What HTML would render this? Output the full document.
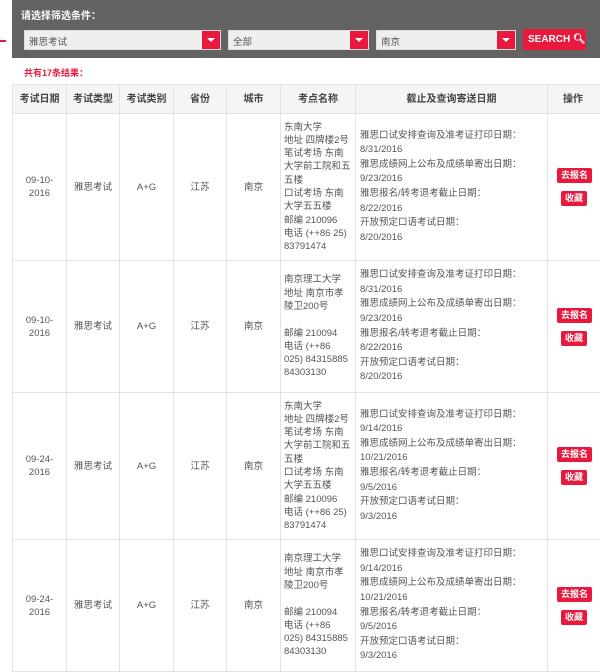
<!DOCTYPE html>
<html><head><meta charset="utf-8"><style>
*{margin:0;padding:0;box-sizing:border-box}
body{width:600px;height:647px;overflow:hidden;background:#fff;font-family:"Liberation Sans","Noto Sans CJK SC",sans-serif;position:relative;color:#555;font-size:9.5px}
.panel{position:absolute;left:12px;top:0;width:600px;height:58px;background:#636363}
.panel .t{position:absolute;left:9px;top:7px;color:#fff;font-weight:bold;font-size:10px}
.sel{position:absolute;top:30px;height:20px;background:#efefef;border:1px solid #ddd;font-size:9.5px;color:#555;padding:3px 0 0 4px}
.sel .a{position:absolute;right:0;top:0;width:18px;height:18px;background:#e8193c}
.sel .a:after{content:"";position:absolute;left:5px;top:7px;border-left:4px solid transparent;border-right:4px solid transparent;border-top:4px solid #fff}
.btn{position:absolute;left:523px;top:29px;width:63px;height:21px;background:#e8193c;color:#fff;font-weight:bold;font-size:10px;padding:5px 0 0 5px}
.cnt{position:absolute;left:24px;top:66px;color:#e8193c;font-weight:bold;font-size:9px}
table{position:absolute;left:12px;top:84px;border-collapse:collapse;width:605px;table-layout:fixed}
td,th{border:1px solid #e3e3e3;text-align:center;vertical-align:middle;line-height:13px}
th{height:29px;background:#f5f5f5;font-size:10px;color:#444}
td.l{text-align:left;padding-left:3px;padding-right:4px;line-height:13.3px}
td.d{text-align:left;padding-left:4px;line-height:14.6px}
.r{display:inline-block;background:#e8193c;color:#fff;font-weight:bold;border-radius:2px;padding:2px 4px;font-size:9px;line-height:11px}
.lm{position:absolute;left:0;top:40px;width:6px;height:2px;background:#e8193c}
</style></head><body>
<div class="lm"></div>
<div class="panel"><div class="t">请选择筛选条件：</div></div>
<div class="sel" style="left:24px;width:197px">雅思考试<div class="a"></div></div>
<div class="sel" style="left:228px;width:141px">全部<div class="a"></div></div>
<div class="sel" style="left:376px;width:140px">南京<div class="a"></div></div>
<div class="btn">SEARCH &#x1F50D;&#xFE0E;</div>
<div class="cnt">共有17条结果：</div>
<table>
<colgroup><col style="width:54px"><col style="width:53px"><col style="width:54px"><col style="width:53px"><col style="width:54px"><col style="width:75px"><col style="width:192px"><col style="width:70px"></colgroup>
<tr><th>考试日期</th><th>考试类型</th><th>考试类别</th><th>省份</th><th>城市</th><th>考点名称</th><th>截止及查询寄送日期</th><th style="text-align:left;padding-left:15px">操作</th></tr>
<tr style="height:147px"><td>09-10-<br>2016</td><td>雅思考试</td><td>A+G</td><td>江苏</td><td>南京</td><td class="l">东南大学<br>地址 四牌楼2号<br>笔试考场 东南大学前工院和五五楼<br>口试考场 东南大学五五楼<br>邮编 210096<br>电话 (++86 25) 83791474</td><td class="d">雅思口试安排查询及准考证打印日期：<br>8/31/2016<br>雅思成绩网上公布及成绩单寄出日期：<br>9/23/2016<br>雅思报名/转考退考截止日期：<br>8/22/2016<br>开放预定口语考试日期：<br>8/20/2016</td><td style="text-align:left;padding-left:9px"><span class="r">去报名</span><br><span class="r" style="margin:8px 0 0 4px">收藏</span></td></tr>
<tr style="height:132px"><td>09-10-<br>2016</td><td>雅思考试</td><td>A+G</td><td>江苏</td><td>南京</td><td class="l">南京理工大学<br>地址 南京市孝陵卫200号<br><br>邮编 210094<br>电话 (++86 025) 84315885<br>84303130</td><td class="d">雅思口试安排查询及准考证打印日期：<br>8/31/2016<br>雅思成绩网上公布及成绩单寄出日期：<br>9/23/2016<br>雅思报名/转考退考截止日期：<br>8/22/2016<br>开放预定口语考试日期：<br>8/20/2016</td><td style="text-align:left;padding-left:9px"><span class="r">去报名</span><br><span class="r" style="margin:8px 0 0 4px">收藏</span></td></tr>
<tr style="height:147px"><td>09-24-<br>2016</td><td>雅思考试</td><td>A+G</td><td>江苏</td><td>南京</td><td class="l">东南大学<br>地址 四牌楼2号<br>笔试考场 东南大学前工院和五五楼<br>口试考场 东南大学五五楼<br>邮编 210096<br>电话 (++86 25) 83791474</td><td class="d">雅思口试安排查询及准考证打印日期：<br>9/14/2016<br>雅思成绩网上公布及成绩单寄出日期：<br>10/21/2016<br>雅思报名/转考退考截止日期：<br>9/5/2016<br>开放预定口语考试日期：<br>9/3/2016</td><td style="text-align:left;padding-left:9px"><span class="r">去报名</span><br><span class="r" style="margin:8px 0 0 4px">收藏</span></td></tr>
<tr style="height:132px"><td>09-24-<br>2016</td><td>雅思考试</td><td>A+G</td><td>江苏</td><td>南京</td><td class="l">南京理工大学<br>地址 南京市孝陵卫200号<br><br>邮编 210094<br>电话 (++86 025) 84315885<br>84303130</td><td class="d">雅思口试安排查询及准考证打印日期：<br>9/14/2016<br>雅思成绩网上公布及成绩单寄出日期：<br>10/21/2016<br>雅思报名/转考退考截止日期：<br>9/5/2016<br>开放预定口语考试日期：<br>9/3/2016</td><td style="text-align:left;padding-left:9px"><span class="r">去报名</span><br><span class="r" style="margin:8px 0 0 4px">收藏</span></td></tr>
</table>
</body></html>
